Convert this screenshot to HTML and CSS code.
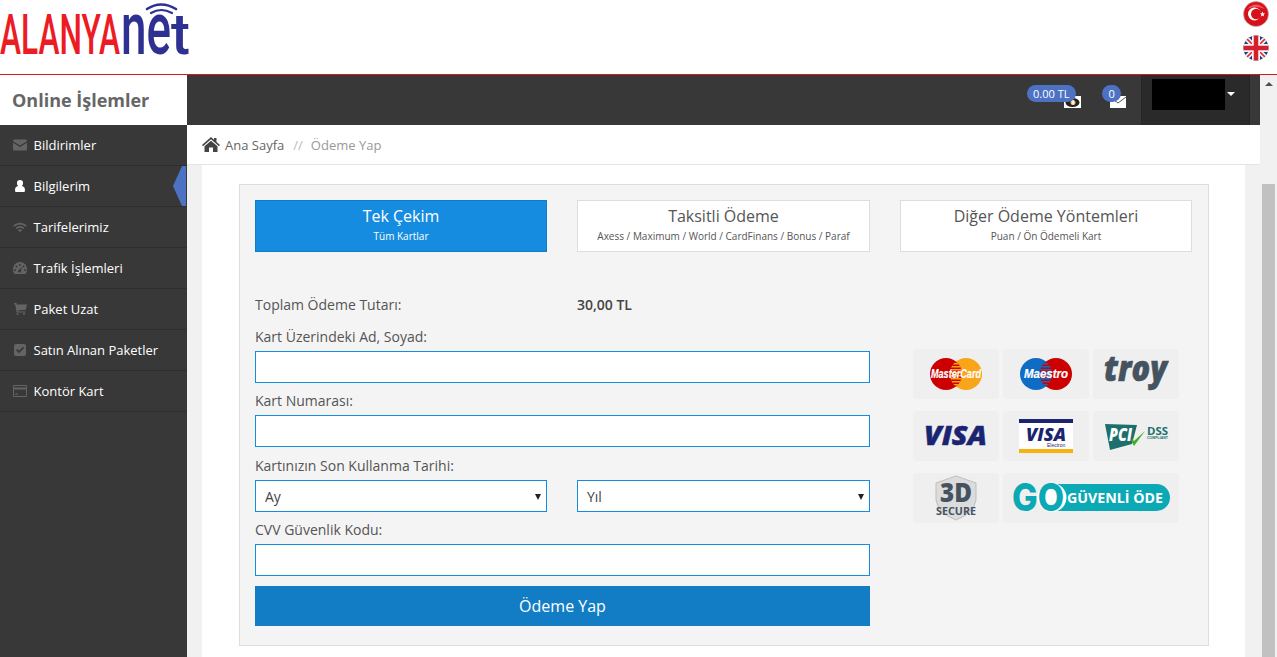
FILE: index.html
```html
<!DOCTYPE html>
<html lang="tr">
<head>
<meta charset="utf-8">
<title>Online İşlemler</title>
<link rel="stylesheet" href="styles.css">
</head>
<body>
<div class="app">
  <header class="site-header">
    <svg class="logo" width="192" height="74" viewBox="0 -2 192 74">
      <text class="logo-red" x="0" y="52" textLength="120" lengthAdjust="spacingAndGlyphs">ALANYA</text>
      <text class="logo-blue" x="121" y="52" textLength="50" lengthAdjust="spacingAndGlyphs">ne</text>
      <text class="logo-blue-t" x="171" y="52" textLength="19" lengthAdjust="spacingAndGlyphs">t</text>
      <g fill="none" stroke="#2e3192" stroke-linecap="round">
        <path d="M147 7 Q161 -2 176 7" stroke-width="2.500"/>
        <path d="M151 11 Q161 5 172 11" stroke-width="2.200"/>
      </g>
    </svg>
    <div class="flags">
      <svg width="26" height="26" viewBox="0 0 26 26">
        <circle cx="13" cy="13" r="12.500" fill="#d8101c" stroke="#b9b9b9" stroke-width=".6"/>
        <path d="M4 8 Q13 -1 22 8 Q13 4 4 8Z" fill="#ee5a62"/>
        <circle cx="11.500" cy="13" r="6.500" fill="#fff"/>
        <circle cx="13.200" cy="13" r="5.200" fill="#d8101c"/>
        <path d="M19.500 10.500l.7 1.800 1.900.1-1.500 1.100.5 1.900-1.600-1-1.600 1 .5-1.900-1.500-1.100 1.900-.1z" fill="#fff"/>
      </svg>
      <svg width="26" height="26" viewBox="0 0 26 26">
        <defs><clipPath id="flag-clip"><circle cx="13" cy="13" r="12.500"/></clipPath></defs>
        <g clip-path="url(#flag-clip)">
          <rect width="26" height="26" fill="#25397f"/>
          <path d="M0 0L26 26M26 0L0 26" stroke="#f2f2f2" stroke-width="5"/>
          <path d="M0 0L26 26M26 0L0 26" stroke="#d4202c" stroke-width="1.500"/>
          <path d="M13 0V26M0 13H26" stroke="#f2f2f2" stroke-width="8"/>
          <path d="M13 0V26M0 13H26" stroke="#d4202c" stroke-width="4.500"/>
        </g>
      </svg>
    </div>
  </header>
  <div class="main">
    <aside class="sidebar">
      <div class="sidebar-title">Online İşlemler</div>
      <nav class="menu">
        <a class="menu-item"><svg class="menu-icon" viewBox="0 0 14 11"><path d="M0 1.200Q0 0 1.200 0H12.800Q14 0 14 1.200V1.800L7 6 0 1.800ZM0 3.200L7 7.400 14 3.200V9.800Q14 11 12.800 11H1.200Q0 11 0 9.800Z"/></svg>Bildirimler</a>
        <a class="menu-item active"><svg class="menu-icon" viewBox="0 0 14 12"><path d="M7 0a3 3 0 0 1 3 3.200c0 1.300-.6 2.400-1.400 2.900C11 6.500 12 7.600 12 10.500 12 11.500 11.300 12 10.500 12h-7C2.700 12 2 11.500 2 10.500c0-2.900 1-4 3.400-4.400C4.600 5.600 4 4.500 4 3.200A3 3 0 0 1 7 0z"/></svg>Bilgilerim<span class="menu-pointer"></span></a>
        <a class="menu-item"><svg class="menu-icon" viewBox="0 0 14 10"><path d="M0 3.500Q7-2 14 3.500L12.800 4.700Q7 .2 1.200 4.700ZM2.400 5.900Q7 2 11.600 5.900L10.400 7.100Q7 4.400 3.600 7.100ZM4.800 8.200Q7 6.400 9.200 8.200L7 10Z"/></svg>Tarifelerimiz</a>
        <a class="menu-item"><svg class="menu-icon" viewBox="0 0 14 12"><path fill-rule="evenodd" d="M7 0a7 7 0 0 1 7 7c0 2-.6 3.600-1.600 5H1.600C.6 10.600 0 9 0 7a7 7 0 0 1 7-7zM7 2a1 1 0 1 0 0 2 1 1 0 0 0 0-2zM3.500 3.500a1 1 0 1 0 0 2 1 1 0 0 0 0-2zM10.500 3.500a1 1 0 1 0 0 2 1 1 0 0 0 0-2zM2 7a1 1 0 1 0 0 2 1 1 0 0 0 0-2zM12 7a1 1 0 1 0 0 2 1 1 0 0 0 0-2zM9 5L6.500 7.500a1.500 1.500 0 1 0 1.500 1.500z"/></svg>Trafik İşlemleri</a>
        <a class="menu-item"><svg class="menu-icon" viewBox="0 0 14 12"><path d="M1 0h2.500l.4 1.500H14l-1.200 5.200-8 .8.300 1H12.500V9.500H3.700L2.200 1.400H1zM4.500 10a1 1 0 1 1 0 2 1 1 0 0 1 0-2zM11 10a1 1 0 1 1 0 2 1 1 0 0 1 0-2z"/></svg>Paket Uzat</a>
        <a class="menu-item"><svg class="menu-icon" viewBox="0 0 14 12"><path fill-rule="evenodd" d="M3 0H11Q13 0 13 2V10Q13 12 11 12H3Q1 12 1 10V2Q1 0 3 0ZM3 6.200L6 9.200 11.200 4 10 2.800 6 6.800 4.200 5Z"/></svg>Satın Alınan Paketler</a>
        <a class="menu-item"><svg class="menu-icon" viewBox="0 0 14 12"><path fill-rule="evenodd" d="M1 0H13Q14 0 14 1V11Q14 12 13 12H1Q0 12 0 11V1Q0 0 1 0ZM1 1V2.500H13V1ZM1 4.500V11H13V4.500ZM2 8.500H5V9.500H2Z"/></svg>Kontör Kart</a>
      </nav>
    </aside>
    <div class="content-col">
      <div class="topbar">
        <div class="stat stat-money">
          <svg class="stat-icon" width="17" height="12" viewBox="0 0 17 12"><rect width="17" height="12" fill="#fff"/><ellipse cx="8.500" cy="6.500" rx="7" ry="4.500" fill="#222"/><circle cx="9" cy="6.500" r="2.500" fill="#f1c27a"/><rect x="8.300" y="4.500" width="1.500" height="4" fill="#fff"/></svg>
          <span class="badge">0.00 TL</span>
        </div>
        <div class="stat stat-mail">
          <svg class="stat-icon" width="16" height="12" viewBox="0 0 16 12"><rect width="16" height="12" fill="#fff"/><path d="M0 1L8 7 16 1" fill="none" stroke="#555" stroke-width="1"/></svg>
          <span class="badge">0</span>
        </div>
        <div class="user-menu"><span class="user-name"></span><span class="user-caret"></span></div>
      </div>
      <div class="breadcrumb">
        <svg class="home-icon" width="18" height="15" viewBox="0 0 18 15"><path d="M9 0L12 2.700V1H14.500V5L18 8 17 9.200 9 2.300 1 9.200 0 8ZM9 3.700L15.500 9.200V15H11V10.500H7V15H2.500V9.200Z"/></svg>
        <span class="crumb">Ana Sayfa</span>
        <span class="crumb-sep">//</span>
        <span class="crumb-current">Ödeme Yap</span>
      </div>
      <div class="page">
        <div class="panel">
          <div class="box">
            <div class="tabs">
              <div class="tab selected"><div class="tab-title">Tek Çekim</div><div class="tab-sub">Tüm Kartlar</div></div>
              <div class="tab"><div class="tab-title">Taksitli Ödeme</div><div class="tab-sub">Axess / Maximum / World / CardFinans / Bonus / Paraf</div></div>
              <div class="tab"><div class="tab-title">Diğer Ödeme Yöntemleri</div><div class="tab-sub">Puan / Ön Ödemeli Kart</div></div>
            </div>
            <div class="pay-area">
              <form class="pay-form">
                <div class="total-row"><span>Toplam Ödeme Tutarı:</span><strong>30,00 TL</strong></div>
                <label class="field-label label-name">Kart Üzerindeki Ad, Soyad:</label>
                <input class="field" type="text">
                <label class="field-label label-number">Kart Numarası:</label>
                <input class="field" type="text">
                <label class="field-label label-date">Kartınızın Son Kullanma Tarihi:</label>
                <div class="select-row">
                  <div class="select-wrap"><select class="field select"><option>Ay</option></select></div>
                  <div class="select-wrap"><select class="field select"><option>Yıl</option></select></div>
                </div>
                <label class="field-label label-cvv">CVV Güvenlik Kodu:</label>
                <input class="field" type="text">
                <button class="pay-button" type="button">Ödeme Yap</button>
              </form>
              <div class="logos">
                <div class="logo-tile">
                  <svg width="54" height="34" viewBox="0 0 54 34">
                    <defs><clipPath id="lens"><path d="M27 4.500a16 16 0 0 1 0 25a16 16 0 0 1 0-25z"/></clipPath></defs>
                    <circle cx="17" cy="17" r="16" fill="#cc0000"/><circle cx="37" cy="17" r="16" fill="#f9a51a"/>
                    <g clip-path="url(#lens)"><rect x="17" width="20" height="34" fill="#cc0000"/><path d="M27 0V34" stroke="#f9a51a" stroke-width="20" stroke-dasharray="1.500 1.500"/></g>
                    <text class="mc-text" x="2" y="21" textLength="50" lengthAdjust="spacingAndGlyphs">MasterCard</text>
                  </svg>
                </div>
                <div class="logo-tile">
                  <svg width="54" height="34" viewBox="0 0 54 34">
                    <circle cx="17" cy="17" r="16" fill="#0f6cc4"/><circle cx="37" cy="17" r="16" fill="#cc0000"/>
                    <g clip-path="url(#lens)"><rect x="17" width="20" height="34" fill="#cc0000"/><path d="M27 0V34" stroke="#0f6cc4" stroke-width="20" stroke-dasharray="1.500 1.500"/></g>
                    <text class="mc-text" x="5" y="21" textLength="44" lengthAdjust="spacingAndGlyphs">Maestro</text>
                  </svg>
                </div>
                <div class="logo-tile">
                  <svg width="66" height="50" viewBox="-1 -8 66 50"><text class="troy-text" x="0" y="24" textLength="63" lengthAdjust="spacingAndGlyphs">troy</text></svg>
                </div>
                <div class="logo-tile">
                  <svg width="66" height="50" viewBox="0 -13 66 50"><text class="visa-text" x="1" y="21" textLength="63" lengthAdjust="spacingAndGlyphs">VISA</text></svg>
                </div>
                <div class="logo-tile">
                  <svg width="54" height="34" viewBox="0 0 54 34"><rect width="54" height="34" fill="#fff"/><rect width="54" height="4" fill="#1a2470"/><rect y="30" width="54" height="4" fill="#f7b20f"/><text class="visa-small" x="7" y="22" textLength="40" lengthAdjust="spacingAndGlyphs">VISA</text><text class="visa-sub" x="28" y="28">Electron</text></svg>
                </div>
                <div class="logo-tile">
                  <svg width="66" height="28" viewBox="0 0 66 28"><path d="M2 2L34 3 29 22 7 28Z" fill="#1d6f6b"/><text class="pci-text" x="6" y="19" textLength="23" lengthAdjust="spacingAndGlyphs">PCI</text><path d="M28 18L31 24 42 9 31 19 29.500 17Z" fill="#3fae2a"/><text class="dss-text" x="44" y="13" textLength="21" lengthAdjust="spacingAndGlyphs">DSS</text><text class="dss-sub" x="44" y="17" textLength="21" lengthAdjust="spacingAndGlyphs">COMPLIANT</text></svg>
                </div>
                <div class="logo-tile">
                  <svg width="44" height="46" viewBox="0 0 44 46"><path d="M22 1L42 8V25Q40 38 22 45 4 38 2 25V8Z" fill="#dcdcdc" stroke="#bdbdbd"/><text class="sec-3d" x="6" y="27" textLength="32" lengthAdjust="spacingAndGlyphs">3D</text><text class="sec-text" x="2" y="40" textLength="40" lengthAdjust="spacingAndGlyphs">SECURE</text></svg>
                </div>
                <div class="logo-tile logo-tile-wide">
                  <svg width="160" height="50" viewBox="0 -10 160 50">
                    <rect x="30" y="1" width="129" height="27" rx="13.500" fill="#0ba8b5"/>
                    <circle cx="41" cy="14.500" r="14.500" fill="#fff"/>
                    <text class="go-mark" x="1" y="28" textLength="52" lengthAdjust="spacingAndGlyphs">GO</text>
                    <text class="go-text" x="56" y="20" textLength="96" lengthAdjust="spacingAndGlyphs">GÜVENLİ ÖDE</text>
                  </svg>
                </div>
              </div>
            </div>
          </div>
        </div>
      </div>
    </div>
    <div class="scrollbar">
      <div class="scroll-arrow"></div>
      <div class="scroll-gap"></div>
      <div class="scroll-thumb"></div>
    </div>
  </div>
</div>
</body>
</html>
```

FILE: styles.css
```css
* { box-sizing: border-box; }
html, body { margin: 0; height: 100%; overflow: hidden; }
body { font-family: "Open Sans", "Liberation Sans", sans-serif; font-size: 13px; color: #555; background: #fff; }
.app { display: flex; flex-direction: column; height: 657px; }

.site-header { height: 75px; flex: none; border-bottom: 1px solid #d9151d; display: flex; justify-content: space-between; background: #fff; }
.logo { display: block; }
.logo-red { font: 500 55px "Roboto", sans-serif; fill: #ed1c24; }
.logo-blue { font: 500 75px "Roboto", sans-serif; fill: #2e3192; }
.logo-blue-t { font: 500 58px "Roboto", sans-serif; fill: #2e3192; }
.flags { display: flex; flex-direction: column; gap: 8px; padding: 1px 8px 0 0; }
.flags svg { display: block; }

.main { flex: 1; display: flex; min-height: 0; }

.sidebar { width: 187px; flex: none; background: #383838; }
.sidebar-title { height: 50px; background: #fff; color: #666; font-size: 18px; font-weight: 700; display: flex; align-items: center; padding-left: 12px; }
.menu { display: flex; flex-direction: column; }
.menu-item { position: relative; height: 41px; display: flex; align-items: center; padding-left: 13px; border-bottom: 1px solid #2e2e2e; color: #fff; font-size: 13px; font-weight: 400; }
.menu-icon { width: 14px; height: 12px; margin-right: 6.500px; fill: #646464; flex: none; }
.menu-item.active .menu-icon { fill: #fff; }
.menu-pointer { position: absolute; right: 1px; top: 0; width: 13px; height: 40px; background: #4d72c4; clip-path: polygon(9px 0, 100% 0, 100% 100%, 9px 100%, 0 50%); }

.content-col { flex: 1; min-width: 0; display: flex; flex-direction: column; }
.topbar { height: 50px; flex: none; background: #383838; display: flex; justify-content: flex-end; padding-right: 10px; }
.stat { position: relative; width: 16px; height: 13px; margin-top: 21px; }
.stat-icon { display: block; }
.stat-money .stat-icon { margin-left: -1px; }
.badge { position: absolute; top: -11px; background: #4d72c4; color: #fff; border-radius: 9px; height: 17px; font-size: 11px; line-height: 17px; padding: 0 6.500px; white-space: nowrap; }
.stat-money { margin-right: 29px; }
.stat-money .badge { right: 5px; }
.stat-mail { margin-right: 15px; }
.stat-mail .badge { left: -8px; }
.user-menu { width: 109px; background: #2a2a2a; border-left: 1px solid #242424; border-right: 1px solid #242424; display: flex; padding: 4px 0 0 10px; }
.user-name { width: 73px; height: 31px; background: #000; }
.user-caret { width: 0; height: 0; margin: 13px 0 0 2px; border-left: 4px solid transparent; border-right: 4px solid transparent; border-top: 4px solid #fff; }

.breadcrumb { height: 40px; flex: none; background: #fff; border-bottom: 1px solid #e5e5e5; display: flex; align-items: center; padding-left: 15px; font-size: 13px; }
.home-icon { fill: #444; margin-right: 5px; flex: none; }
.crumb { color: #666; }
.crumb-sep { color: #bbb; margin: 0 8px 0 9px; }
.crumb-current { color: #999; }

.page { flex: 1; min-height: 0; background: #f1f1f1; padding: 0 15px; }
.panel { height: 100%; background: #fff; padding: 19px 36px 0 37px; }
.box { height: 462px; background: #f4f4f4; border: 1px solid #ddd; padding: 15px; }

.tabs { display: grid; grid-template-columns: 292px 293px 292px; column-gap: 30px; }
.tab { height: 52px; background: #fff; border: 1px solid #ddd; text-align: center; color: #555; }
.tab.selected { background: #158cdf; border-color: #127dc4; color: #fff; }
.tab-title { font-size: 16px; line-height: 22px; margin-top: 4px; }
.tab-sub { font-size: 10px; line-height: 14px; margin-top: 2px; }

.pay-area { display: flex; gap: 43px; }
.pay-form { width: 615px; flex: none; }
.total-row { display: grid; grid-template-columns: 322px 1fr; margin-top: 43px; line-height: 20px; font-size: 14px; }
.total-row strong { font-weight: 600; color: #444; }
.field-label { display: block; font-size: 14px; line-height: 20px; color: #555; }
.label-name { margin-top: 12px; margin-bottom: 4px; }
.label-number { margin-top: 8px; margin-bottom: 4px; }
.label-date { margin-top: 9px; margin-bottom: 4px; }
.label-cvv { margin-top: 8px; margin-bottom: 4px; }
.field { display: block; width: 100%; height: 32px; border: 1px solid #158cdf; border-radius: 0; background: #fff; padding: 0 9px; font: 14px "Open Sans", sans-serif; color: #444; outline: 0; }
.select { appearance: none; -webkit-appearance: none; }
.select-row { display: grid; grid-template-columns: 292px 293px; column-gap: 30px; }
.select-wrap { position: relative; }
.select-wrap::after { content: ""; position: absolute; right: 6px; top: 14px; border-left: 3.500px solid transparent; border-right: 3.500px solid transparent; border-top: 6px solid #222; pointer-events: none; }
.pay-button { display: block; width: 100%; height: 40px; margin-top: 10px; border: 0; background: #127dc4; color: #fff; font: 16px "Open Sans", sans-serif; }

.logos { display: grid; grid-template-columns: repeat(3, 86px); grid-auto-rows: 50px; column-gap: 4px; row-gap: 12px; margin-top: 97px; align-content: start; }
.logo-tile { background: #efefef; border-radius: 4px; display: flex; align-items: center; justify-content: center; }
.logo-tile-wide { grid-column: span 2; }
.logo-tile svg { display: block; }
.mc-text { font: italic 700 12px "Liberation Sans", sans-serif; fill: #fff; stroke: #fff; stroke-width: .2; }
.troy-text { font: italic 800 35px "Open Sans", sans-serif; fill: #44535f; stroke: #44535f; stroke-width: .6; }
.visa-text { font: italic 800 27px "Open Sans", sans-serif; fill: #1a2470; stroke: #1a2470; stroke-width: .5; }
.visa-small { font: italic 800 18px "Open Sans", sans-serif; fill: #1a2470; }
.visa-sub { font: 5px "Liberation Sans", sans-serif; fill: #1a2470; }
.pci-text { font: italic 800 17px "Open Sans", sans-serif; fill: #fff; }
.dss-text { font: 700 11px "Open Sans", sans-serif; fill: #1d6f6b; }
.dss-sub { font: 700 4px "Liberation Sans", sans-serif; fill: #1d6f6b; }
.sec-3d { font: 800 27px "Open Sans", sans-serif; fill: #44535f; }
.sec-text { font: 700 11px "Open Sans", sans-serif; fill: #44535f; }
.go-mark { font: 800 38px "Inter", sans-serif; fill: #0ba8b5; }
.go-text { font: 700 14.500px "Open Sans", sans-serif; fill: #fff; }

.scrollbar { width: 17px; flex: none; background: #f1f1f1; display: flex; flex-direction: column; }
.scroll-arrow { height: 0; width: 0; margin: 7px 0 0 5px; border-left: 4px solid transparent; border-right: 4px solid transparent; border-bottom: 4px solid #505050; }
.scroll-gap { height: 98px; }
.scroll-thumb { flex: 1; background: #c1c1c1; margin: 0 2px; }
```
